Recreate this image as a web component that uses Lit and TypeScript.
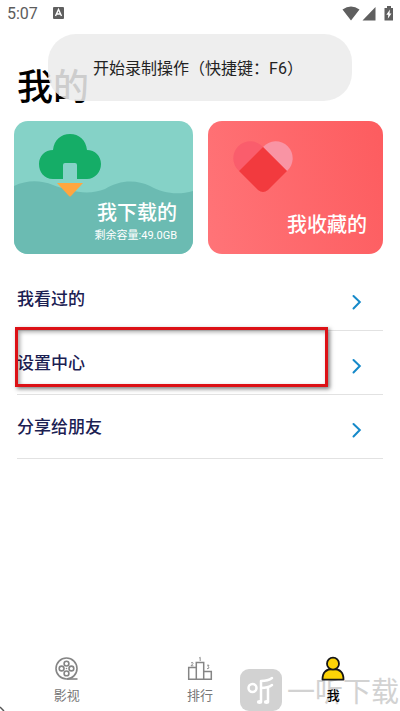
import { LitElement, html, css, svg } from "lit";
import { customElement } from "lit/decorators.js";

const film = svg`<g fill="none" stroke="#858585" stroke-width="1.6"><circle cx="12.500" cy="12.500" r="10.500"/><path d="M13 23H23.500"/><circle cx="12.500" cy="7.600" r="2.400"/><circle cx="12.500" cy="17.400" r="2.400"/><circle cx="7.600" cy="12.500" r="2.400"/><circle cx="17.400" cy="12.500" r="2.400"/></g><circle cx="12.500" cy="12.500" r=".8" fill="#858585"/>`;
const podium = svg`<g fill="none" stroke="#858585" stroke-width="1.5"><path d="M1.700 11.500H9.300V23.300H1.700ZM9.300 6.500H16.700V23.300H9.300ZM16.700 15.500H24.300V23.300H16.700Z"/></g><g fill="none" stroke="#858585" stroke-width=".9"><path d="M12.200 2L13.200 1.300V5M4 6.900Q6.300 5.600 6 7.600L4 9.800H6.400M20 9.200H22L21 10.500Q22.600 11 21.600 12.400L20 12.700"/></g>`;
const person = svg`<path d="M2.500 23.600C2.500 16.500 6 13 13 13S23.500 16.500 23.500 23.600Z" fill="#fcd307" stroke="#161616" stroke-width="1.800" stroke-linejoin="round"/><circle cx="13" cy="7.700" r="6" fill="#fcd307" stroke="#161616" stroke-width="1.800"/>`;

@customElement("app-root")
export class AppRoot extends LitElement {
  static styles = css`
    :host {
      display: flex;
      flex-direction: column;
      position: relative;
      min-height: 100vh;
      overflow: hidden;
      background: #fff;
      font-family: Roboto, "Noto Sans CJK SC", sans-serif;
    }
    * { box-sizing: border-box; }
    svg { display: block; }
    button { border: 0; background: none; padding: 0; font: inherit; color: inherit; cursor: pointer; }
    .status {
      display: flex;
      align-items: center;
      height: 26px;
      padding: 0 6px 0 7px;
      color: #5c5c5c;
      font-size: 16px;
    }
    .badge { margin-left: 15px; margin-right: auto; }
    h1 {
      margin: 37px 17px 0;
      font-size: 36px;
      line-height: 50px;
      font-weight: 500;
      color: #000;
    }
    .toast {
      position: absolute;
      top: 34px;
      left: 12%;
      right: 12%;
      height: 67px;
      display: flex;
      align-items: center;
      justify-content: center;
      padding: 0 4px 2px 0;
      border-radius: 28px;
      background: rgba(236, 236, 236, 0.87);
      color: #222;
      font-size: 16px;
      white-space: nowrap;
    }
    .cards {
      display: grid;
      grid-template-columns: 179fr 175fr;
      gap: 15px;
      margin: 8px 17px 0 14px;
    }
    .card {
      position: relative;
      height: 133px;
      border-radius: 14px;
      overflow: hidden;
      color: #fff;
      text-align: right;
      display: flex;
      flex-direction: column;
      justify-content: flex-end;
      padding: 0 16px 9px;
    }
    .down { background: #85d2c7; }
    .fav { background: linear-gradient(75deg, #ff7478, #fd5c5f); padding-bottom: 15px; }
    .art { position: absolute; inset: 0; width: 100%; height: 100%; }
    .name { position: relative; font-size: 20px; line-height: 28px; font-weight: 500; }
    .space { position: relative; font-size: 11px; line-height: 18px; }
    .list { list-style: none; margin: 13px 17px 0; padding: 0; }
    .item { position: relative; border-bottom: 1px solid #e2e2e2; }
    .row {
      display: flex;
      align-items: center;
      justify-content: space-between;
      width: 100%;
      height: 63px;
      padding: 0 21px 2px 0;
      color: #1b2052;
      font-size: 17px;
      font-weight: 500;
    }
    .row svg { margin-top: 8px; }
    .mark {
      position: absolute;
      top: -4px;
      left: -2px;
      right: 55px;
      height: 60px;
      border: 3px solid #dc1116;
      box-shadow: 2px 2px 4px rgba(0, 0, 0, 0.5), inset 2px 2px 4px rgba(0, 0, 0, 0.35);
      pointer-events: none;
    }
    nav {
      z-index: 1;
      display: grid;
      grid-template-columns: repeat(3, 1fr);
      margin-top: auto;
      padding-bottom: 5px;
    }
    .tab {
      display: flex;
      flex-direction: column;
      align-items: center;
      font-size: 13px;
      line-height: 20px;
      gap: 4px;
      color: #777;
    }
    .on { color: #000; font-weight: 500; }
    .water {
      position: absolute;
      left: 60%;
      bottom: 0;
      height: 42px;
      display: flex;
      align-items: center;
      gap: 5px;
      color: #d2d2d2;
      font-size: 28px;
      line-height: 36px;
      white-space: nowrap;
    }
    .water span { padding-top: 6px; }
    .corner { position: absolute; left: 0; bottom: 0; }
  `;

  item(name: string, marked = false) {
    return html`<li class="item">
      <button class="row"><span>${name}</span>
        <svg width="10" height="16" viewBox="0 0 10 16" aria-hidden="true"><path d="M1.500 2L7.800 8L1.500 14.500" fill="none" stroke="#1589c9" stroke-width="2" stroke-linecap="round"/></svg>
      </button>
      ${marked ? html`<div class="mark"></div>` : ""}
    </li>`;
  }

  tab(name: string, icon: unknown, on = false) {
    return html`<button class="tab ${on ? "on" : ""}"><svg width="26" height="26" viewBox="0 0 26 26" overflow="visible" aria-hidden="true">${icon}</svg><span>${name}</span></button>`;
  }

  render() {
    return html`
      <div class="status">
        <span>5:07</span>
        <svg class="badge" width="11" height="12" viewBox="0 0 11 12"><rect width="11" height="12" rx="1" fill="#5f5f5f"/><path d="M2.500 9L5.500 2.500L8.500 9M3.500 7H7.500" fill="none" stroke="#fff" stroke-width="1.400"/></svg>
        <svg width="52" height="16" viewBox="0 0 52 16" fill="#5f5f5f"><path d="M.5 4.500Q9 -1.500 17.500 4.500L9 15.500ZM33.500 2V15.500H20.500ZM42.500 3H45V1H49V3H51V15.500H42.500Z"/><path d="M48 4.500L44.300 9.800H46.300L45.800 13.800L49.500 8.500H47.500Z" fill="#fff"/></svg>
      </div>
      <h1>我的</h1>
      <div class="cards">
        <button class="card down">
          <svg class="art" viewBox="0 0 179 133" preserveAspectRatio="none" aria-hidden="true">
            <path d="M0 65C13 59 26 59 39 64C55 70 74 75 91 68C105 59 122 58 136 65C150 73 165 74 179 70V133H0Z" fill="#6bbbb2"/>
            <path d="M39 58C30 58 25 51 25 43C25 35 31 29 39 29C40 19 47 13 56 13C65 13 72 19 73 29C81 29 87 35 87 43C87 51 81 58 73 58H63V44Q63 42 61 42H51Q49 42 49 44V58Z" fill="#15ad67"/>
            <path d="M43 62H69L57 75Q56 76 55 75Z" fill="#ffa640"/>
          </svg>
          <span class="name">我下载的</span><span class="space">剩余容量:49.0GB</span>
        </button>
        <button class="card fav">
          <svg class="art" viewBox="0 0 175 133" preserveAspectRatio="none" aria-hidden="true">
            <path d="M31 50A17 17 0 1 1 55 26Z" fill="#fa5d6c"/>
            <path d="M55 26A17 17 0 1 1 79 50Z" fill="#f994a4"/>
            <path d="M55 26L79 50L60 69Q55 73 50 69L31 50Z" fill="#f23a3e"/>
          </svg>
          <span class="name">我收藏的</span>
        </button>
      </div>
      <ul class="list">${this.item("我看过的")}${this.item("设置中心", true)}${this.item("分享给朋友")}</ul>
      <div class="water">
        <svg width="42" height="42" viewBox="0 0 42 42" aria-hidden="true"><rect width="42" height="42" rx="9" fill="#d2d2d2"/><g fill="none" stroke="#fff" stroke-width="2.500" stroke-linecap="round" stroke-linejoin="round"><circle cx="12.500" cy="19" r="4"/><path d="M32 9Q28 12 21 12V33M21 19Q28 19 32 16M28 19V33"/></g><g fill="#fff"><ellipse cx="19.500" cy="33" rx="2.700" ry="2"/><ellipse cx="26.500" cy="33" rx="2.700" ry="2"/></g></svg>
        <span>一听下载</span>
      </div>
      <nav>${this.tab("影视", film)}${this.tab("排行", podium)}${this.tab("我", person, true)}</nav>
      <svg class="corner" width="5" height="5" viewBox="0 0 5 5" aria-hidden="true"><path d="M0 1L4 5" stroke="#555" stroke-width="1.500"/></svg>
      <div class="toast" role="status">开始录制操作（快捷键：F6）</div>
    `;
  }
}
